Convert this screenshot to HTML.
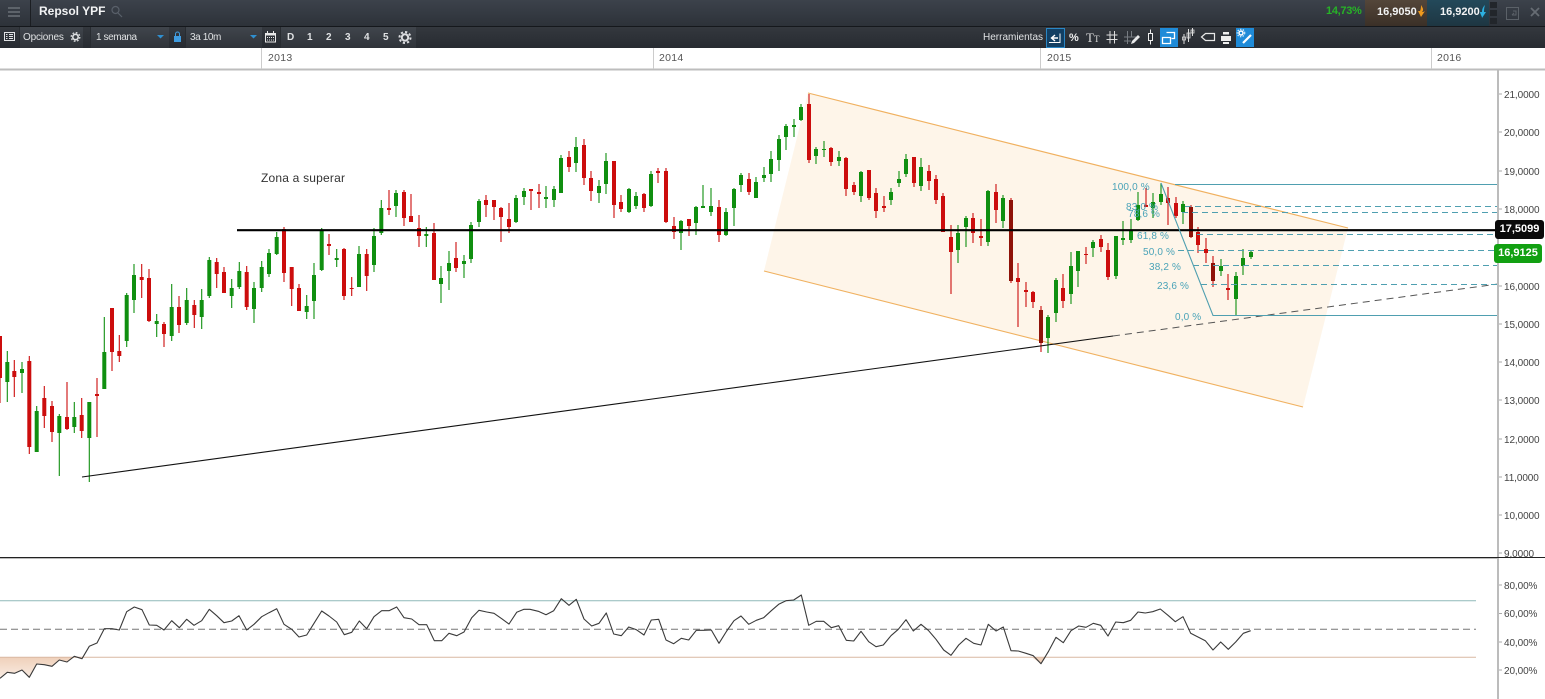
<!DOCTYPE html>
<html lang="es">
<head>
<meta charset="utf-8">
<title>Repsol YPF</title>
<style>
html,body{margin:0;padding:0;background:#fff;width:1545px;height:699px;overflow:hidden;font-family:"Liberation Sans",sans-serif}
#p{position:relative;width:1545px;height:699px;overflow:hidden}
svg{position:absolute;left:0;top:0}
.a{position:absolute;white-space:nowrap}
#t1{left:0;top:0;width:1545px;height:26px;background:linear-gradient(#3c424b,#2d3239);border-bottom:1px solid #15181c}
#t2{left:0;top:27px;width:1545px;height:21px;background:linear-gradient(#34383e,#272b31)}
.tb{top:27px;height:21px;background:linear-gradient(#40454c,#2f3339);border-left:1px solid #282c31}
.w{color:#dfe1e3;font-size:10px;line-height:20px;top:28px}
.y{top:52px;font-size:10.5px;line-height:12px;color:#555;letter-spacing:.3px}
.ax{left:1504px;font-size:10px;line-height:12px;color:#444;letter-spacing:-.1px}
.f{font-size:10px;line-height:12px;color:#4aa3b8;letter-spacing:.15px}
.lab{color:#fff;font-weight:bold;font-size:11px;text-align:center}
</style>
</head>
<body>
<div id="p">
<div class="a" id="t1"></div>
<div class="a" id="t2"></div>
<div class="a" style="left:30px;top:0;width:1px;height:26px;background:#1b1e22"></div>
<div class="a" style="left:39px;top:4px;font-size:12px;line-height:15px;font-weight:bold;color:#f2f3f4">Repsol YPF</div>
<div class="a" style="left:1326px;top:4px;font-size:11px;line-height:15px;color:#27b327;font-weight:bold;letter-spacing:-.3px">14,73%</div>
<div class="a" style="left:1365px;top:0;width:62px;height:26px;background:linear-gradient(#54463a,#3b3027)"></div>
<div class="a" style="left:1427px;top:0;width:62px;height:26px;background:linear-gradient(#23495a,#1e3642)"></div>
<div class="a" style="left:1377px;top:5px;font-size:11px;line-height:15px;font-weight:bold;color:#f2f3f4">16,9050</div>
<div class="a" style="left:1440px;top:5px;font-size:11px;line-height:15px;font-weight:bold;color:#f2f3f4">16,9200</div>

<div class="a tb" style="left:19px;width:63px"></div>
<div class="a tb" style="left:90px;width:78px"></div>
<div class="a tb" style="left:185px;width:76px"></div>
<div class="a tb" style="left:280px;width:135px"></div>
<div class="a w" style="left:23px;letter-spacing:-.2px">Opciones</div>
<div class="a w" style="left:96px;letter-spacing:-.4px">1 semana</div>
<div class="a w" style="left:190px;letter-spacing:-.4px">3a 10m</div>
<div class="a w" style="left:287px;font-weight:bold">D</div>
<div class="a w" style="left:307px;font-weight:bold">1</div>
<div class="a w" style="left:326px;font-weight:bold">2</div>
<div class="a w" style="left:345px;font-weight:bold">3</div>
<div class="a w" style="left:364px;font-weight:bold">4</div>
<div class="a w" style="left:383px;font-weight:bold">5</div>
<div class="a w" style="left:983px">Herramientas</div>

<div class="a" style="left:1046px;top:28px;width:17px;height:18px;background:#123f63;border:1px solid #2a86c4"></div>
<div class="a" style="left:1160px;top:28px;width:18px;height:19px;background:#1f8bd8"></div>
<div class="a" style="left:1236px;top:28px;width:18px;height:19px;background:#1f8bd8"></div>
<div class="a w" style="left:1069px;font-weight:bold;font-size:11px;color:#eee">%</div>
<div class="a" style="left:1086px;top:28px;line-height:20px;color:#ddd;font-family:'Liberation Serif',serif;font-size:13px">T<span style="font-size:9px">T</span></div>

<svg width="1545" height="699" viewBox="0 0 1545 699" fill="none">
<!-- header icons -->
<path d="M8 8h12M8 12h12M8 16h12" stroke="#5d636a" stroke-width="2"/>
<circle cx="115.500" cy="10" r="3.500" stroke="#59606a" stroke-width="1.200"/><path d="M118 13l4 4" stroke="#59606a" stroke-width="1.200"/>
<path d="M1421 5c2 3 3 5 1 7 2 0 3-1 3-1l-4 6-3-6h2c1-2 1-4 1-6z" fill="#ef9a1e"/>
<path d="M1485 5c-1 3-1 5-1 7h2l-4 6c0-2-2-4-2-6h2c0-3 1-5 3-7z" fill="#2cb0e0"/>
<path d="M1490 2h7v6h-7zM1490 10h7v6h-7zM1490 18h7v6h-7z" fill="#22262b"/>
<path d="M1506.500 7.500h12v12h-12z" stroke="#5b6168"/><path d="M1513 11h3v4h-4M1512 15l2-2" stroke="#5b6168"/>
<path d="M1531 8l8 8M1539 8l-8 8" stroke="#666c73" stroke-width="1.800"/>
<!-- toolbar icons -->
<path d="M4.500 32.500h10v8h-10z" stroke="#e2e4e6"/><path d="M6 34.500h1.500M6 36.500h1.500M6 38.500h1.500M9 34.500h4M9 36.500h4M9 38.500h4" stroke="#e2e4e6"/>
<circle cx="75.500" cy="37" r="2.700" stroke="#dfe1e3" stroke-width="1.600"/><circle cx="75.500" cy="37" r="4.300" stroke="#dfe1e3" stroke-width="1.300" stroke-dasharray="1.700 1.700"/>
<path d="M157 35h7l-3.500 3.500z" fill="#2f8fd0"/><path d="M250 35h7l-3.500 3.500z" fill="#2f8fd0"/>
<path d="M174 36h7v6h-7z" fill="#3f9ce0"/><path d="M175.500 36v-2a2 2 0 0 1 4 0v2" stroke="#3f9ce0"/>
<path d="M265.500 33.500h10v8.500h-10z" stroke="#e8e8e8"/><path d="M265 33h11v2.500h-11z" fill="#e8e8e8"/><path d="M267.500 31v3M273.500 31v3" stroke="#e8e8e8"/><path d="M267 37.500h8M267 40h8" stroke="#e8e8e8" stroke-dasharray="1 1"/>
<circle cx="405" cy="37.500" r="3.200" stroke="#dcdde0" stroke-width="2"/><circle cx="405" cy="37.500" r="5.500" stroke="#dcdde0" stroke-width="2" stroke-dasharray="2.200 2.100"/>
<path d="M1049 42.500h11v-9" stroke="#fff"/><path d="M1058 38h-6M1055 35l-3.500 3 3.500 3" stroke="#fff" stroke-width="1.400"/>
<path d="M1106.500 35h11M1106.500 39.500h11M1110 31v12.500M1114.500 31v12.500" stroke="#ddd"/>
<path d="M1124 37h14M1124 41h7M1127.500 31v13M1131.500 31v6" stroke="#777c82"/><path d="M1131 44l1-3 6-6 2 2-6 6z" fill="#e9eaeb"/>
<path d="M1150.500 29.500v15" stroke="#eee"/><path d="M1148.500 33.500h4v7h-4z" stroke="#eee" fill="#2a2e34"/>
<path d="M1162.500 37.500h8v6h-8zM1166.500 32.500h8v6h-3" stroke="#fff" stroke-width="1.300"/>
<path d="M1184 34v10M1188.500 29v13M1192.500 28v8" stroke="#ddd"/><path d="M1182.500 37h3v3h-3zM1187 33h3v5h-3zM1191 30h3v3h-3z" stroke="#ddd" stroke-width=".8"/>
<path d="M1201.500 37l4-3.500h9v7h-9z" stroke="#e8e8e8" stroke-width="1.200"/>
<path d="M1221 36h10v5h-10z" fill="#eee"/><path d="M1223 32h6v2.500h-6zM1223 42h6v2h-6z" fill="#eee"/>
<circle cx="1241" cy="33" r="2" stroke="#fff" stroke-width="1.500"/><circle cx="1241" cy="33" r="3.800" stroke="#fff" stroke-dasharray="1.400 1.400"/><path d="M1243 43l8-8" stroke="#fff" stroke-width="2.200"/>

<!-- time strip -->
<path d="M0 69.500h1545" stroke="#bdbdbd" stroke-width="2"/>
<path d="M261.500 48v21M653.500 48v21M1040.500 48v21M1431.500 48v21" stroke="#ccc"/>

<!-- channel -->
<path d="M808 93L1348 228L1303 407L764 271z" fill="#fef5e9"/>
<path d="M808 93L1348 228M764 271L1303 407" stroke="#f0b160" stroke-width="1.100"/>

<!-- green candles -->
<g stroke="#108f10">
<path stroke-width="1.100" d="M7.300 351V402M22 362V393M36.700 406V452M59.300 414V476M74.300 402V433M89.300 402V482M104.300 317V389M126.700 293V347M134 264V313M156.700 314V337M171.700 284V341M186.700 288V325M201.700 289V329M209.300 257V298M231.700 279V308M239.300 262V289M254 282V323M261.700 261V292M269 249V277M276.700 232V255M306.700 295V319M314 263V319M321.700 228V271M336.700 249V267M359 246V287M374 228V272M381.300 200V235M396 190V217M426.300 227V247M441 266V303M449 251V290M464 255V278M471 222V263M479 199V227M516 195V223M524 188V205M546 186V208M554 186V207M561 155V193M576 137V172M599 180V203M606 153V194M629 188V213M636 192V209M651 171V207M681 220V250M696 206V235M703 185V208M711 188V216M726 208V236M734 188V226M741 173V192M756 177V198M764 167V182M771 151V182M779 135V171M786 124V150M794 119V137M801 104V121M816 147V164M824 141V157M839 151V166M861 171V202M891 188V205M899 171V187M906 154V177M921 158V191M958 225V263M966 216V247M988 190V246M1003 195V228M1048 315V353M1056 278V322M1071 252V304M1078 251V287M1093 240V257M1116 236V279M1123 221V245M1131 219V243M1138 192V221M1153 193V218M1161 183V205M1183 201V224M1221 259V276M1236 272V316M1243 249V275M1251 250V259"/>
<path stroke-width="4" d="M7.300 362V382M22 369V373M36.700 411V452M59.300 416V433M74.300 417V427M89.300 402V438M104.300 352V389M126.700 295V341M134 275V300M156.700 321V324M171.700 307V336M186.700 300V323M201.700 300V317M209.300 260V296M231.700 288V296M239.300 271V287M254 288V309M261.700 267V288M269 253V274M276.700 237V254M306.700 306V312M314 275V301M321.700 230V270M336.700 258V260M359 254V287M374 236V265M381.300 208V233M396 193V206M426.300 234V236M441 278V284M449 263V271M464 261V264M471 225V259M479 201V222M516 198V222M524 191V197M546 197V199M554 189V200M561 158V193M576 147V163M599 186V193M606 161V184M629 189V212M636 196V206M651 174V206M681 221V233M696 207V223M703 206V208M711 206V212M726 212V235M734 189V208M741 175V185M756 182V198M764 175V178M771 159V174M779 139V160M786 126V137M794 125V127M801 107V120M816 149V156M824 149V150M839 157V161M861 172V196M891 192V200M899 179V183M906 159V174M921 167V186M958 233V250M966 218V227M988 191V242M1003 198V221M1048 317V338M1056 280V313M1071 266V294M1078 251V271M1093 242V248M1116 236V276M1123 238V240M1131 230V240M1138 205V220M1153 202V208M1161 194V202M1183 204V212M1221 266V271M1236 276V299M1243 258V266M1251 252V257"/>
</g>
<!-- red candles -->
<g stroke="#cc0d0d">
<path stroke-width="1.100" d="M0 336V403M14.300 360V397M29.300 356V454M44.300 386V428M52 401V442M67 382V430M81.700 398V438M97 378V437M112 308V371M119.300 335V362M141.700 264V298M149 269V322M164 322V347M179 296V333M194.300 300V328M216.700 258V288M224 267V293M246.700 266V310M284 227V282M291.700 267V306M299 284V311M329 234V255M344 248V300M351.700 277V296M366.700 249V291M389 190V215M404 190V226M411 194V222M419 215V247M434 223V280M456 242V272M486 195V217M494 200V220M501 207V242M509 203V233M531 189V210M539 184V208M569 151V172M584 139V185M591 171V201M614 161V218M621 195V212M644 193V212M658 168V183M666 168V223M674 217V239M689 219V236M719 200V242M749 173V195M809 94V163M831 147V166M846 157V196M854 182V195M869 170V200M876 188V218M884 196V212M914 157V187M929 165V190M936 175V204M943 193V232M951 225V294M973 213V243M981 219V246M996 184V223M1011 198V283M1018 263V327M1026 282V307M1033 291V308M1041 306V352M1063 274V308M1086 247V264M1101 235V252M1108 243V280M1146 188V207M1168 187V225M1176 197V218M1191 205V238M1198 227V253M1206 238V263M1213 256V287M1228 274V300"/>
<path stroke-width="4" d="M0 336V378M14.300 371V377M29.300 361V447M44.300 398V416M52 406V432M67 417V429M81.700 415V431M97 394V396M112 308V352M119.300 351V356M141.700 277V280M149 278V321M164 324V334M179 307V325M194.300 305V315M216.700 262V274M224 272V293M246.700 272V307M284 229V273M291.700 267V289M299 288V311M329 244V246M344 249V296M351.700 288V289M366.700 254V276M389 208V210M404 192V218M411 216V222M419 228V236M434 233V280M456 258V268M486 200V205M494 200V207M501 208V217M509 219V227M531 189V191M539 192V194M569 157V167M584 145V178M591 178V191M614 161V205M621 202V209M644 194V208M658 171V173M666 171V222M674 226V232M689 219V226M719 207V235M749 179V192M809 104V160M831 148V162M846 158V189M854 185V192M869 170V198M876 193V211M884 206V208M914 157V183M929 171V181M936 179V200M943 196V232M951 237V252M973 218V233M981 236V238M996 192V210M1018 278V282M1026 290V292M1033 292V302M1063 288V301M1086 254V255M1101 239V247M1108 250V277M1146 205V207M1168 198V203M1176 203V216M1198 232V245M1206 249V253M1228 288V290"/>
<path stroke="#8f1208" stroke-width="4" d="M1011 200V281M1041 310V343M1191 207V237M1213 263V281"/>
</g>

<!-- zone line + trendline -->
<path d="M237 230.200H1498" stroke="#000" stroke-width="2.200"/>
<path d="M82 477L1113 336" stroke="#111" stroke-width="1.100"/>
<path d="M1113 336L1498 284" stroke="#555" stroke-dasharray="7 5"/>

<!-- fibonacci -->
<path d="M1161 183L1213 315.500H1498M1175 184.500H1498" stroke="#4f9fb0" stroke-width="1.100"/>
<path d="M1185 206.500H1498M1182 212.500H1498M1197 234.500H1498M1178 250.500H1498M1193 265.500H1498M1201 284.500H1498" stroke="#4f9fb0" stroke-dasharray="6 4"/>

<!-- price axis -->
<path d="M1498 70V699" stroke="#bcbcbc" stroke-width="2"/>
<path d="M1499 94h3M1499 132h3M1499 171h3M1499 209h3M1499 286h3M1499 324h3M1499 362h3M1499 400h3M1499 439h3M1499 477h3M1499 515h3M1499 553h3M1499 585h3M1499 613.500h3M1499 642h3M1499 670h3" stroke="#aaa"/>

<!-- separator -->
<path d="M0 557.500H1545" stroke="#222" stroke-width="1"/>
<path d="M0 558.500H1498" stroke="#bbb" stroke-width="1"/>

<!-- RSI -->
<defs><linearGradient id="g" x1="0" y1="657" x2="0" y2="682" gradientUnits="userSpaceOnUse"><stop offset="0" stop-color="#efd0ba"/><stop offset="1" stop-color="#fbf1ea"/></linearGradient></defs>
<path d="M0 657.300H75L74.300 656.300L67 662L59.300 660L52 666.300L44.300 664.700L36.700 664L29.300 677.300L22 670L14.700 673.300L7.300 672.300L0 678.300z" fill="url(#g)"/>
<path d="M1032 657.300H1046L1041 663.700z" fill="#efd0ba"/>
<path d="M0 600.700H1476" stroke="#8fb9b9"/>
<path d="M0 657.300H1476" stroke="#d9b8a2"/>
<path d="M0 629.300H1476" stroke="#777" stroke-dasharray="7 4"/>
<polyline stroke="#3a3a3a" stroke-width="1.100" stroke-linejoin="round" points="0,678.300 7.300,672.300 14.700,673.300 22,670 29.300,677.300 36.700,664 44.300,664.700 52,666.300 59.300,660 67,662 74.300,656.300 82,658.700 89.300,646.300 97,643 104.300,628.700 112,628.700 119.300,630 126.700,611.700 134.300,607 142,609.700 149.300,625 156.700,625.300 164,630 171.700,620.700 179.300,627.700 186.700,619.300 194,625.300 201.700,620.700 209.300,609.300 216.700,615.700 224,622.700 231.700,621 239,615.700 246.700,630 254,624.300 261.700,616.700 269,612.700 276.700,608.700 284,624.300 291.700,629.300 299,637 306.700,635 314,623.300 321.700,611 329,616 336.700,622 344.300,634.700 351.700,632.300 359.300,621 366.700,628.700 374,616.700 381.700,610.700 389,610.700 396.700,607 404,617.700 411.700,619 419,624.700 426.700,624.700 434.300,640.700 441.700,640.700 449,633.300 456.700,635.700 464,632 471.700,617.700 479,610.300 486.700,612 494,613.300 501.700,618.700 509,624 516.700,612.300 524,609.300 530,609.300 538.300,611.300 546,614.700 553.700,610.700 561.300,598.700 569,605.300 576.300,599.300 584,619 591.700,626 599,623.300 606.300,613 613.700,634 621.300,635.700 628.700,627 636.300,629.700 644,635 651.300,620 658.700,619.300 666,640 673.700,643.700 681.300,638.300 688.700,640 696.300,630.300 703.700,630.300 711.300,630 719,643.300 726.700,631 734,620.700 741,616 748.700,624.300 756.300,620.300 763.700,617.700 771.300,610.700 778.700,604.300 786,600.700 793.700,600 801.300,595 808.700,625.300 816.300,621.300 823.700,621.300 831.300,627.700 838.700,625.700 846.300,640.300 853.700,641 861,631.300 868.700,641.700 876,646.700 883.300,645 891,635.700 898.300,629.300 906,619.700 913.300,631 921,624.300 928.300,630.300 936,639.300 943.700,650 951,655.300 958.700,645 966,638.300 973.700,643.300 981,645 988.300,624.300 996,631 1003.300,627 1011,650.700 1018.300,651 1026,653.300 1033.300,655.700 1041,663.700 1048.300,651.700 1056,637.300 1063.300,642.700 1071,630.700 1078.700,626 1086,627.300 1093.300,623.300 1100.700,625.300 1108,636 1115.700,622 1123.300,622.700 1130.700,620.300 1138,612 1145.300,613 1152.700,611.700 1160.300,609 1168,615.300 1175.300,621.700 1183,616.700 1190.700,633.300 1198,637 1205.300,640.700 1213,650 1220.700,642 1228.300,649.300 1235.700,642 1243.300,633.300 1250.700,630.700"/>
</svg>

<div class="a y" style="left:268px">2013</div>
<div class="a y" style="left:659px">2014</div>
<div class="a y" style="left:1047px">2015</div>
<div class="a y" style="left:1437px">2016</div>

<div class="a" style="left:261px;top:171px;font-size:12px;line-height:15px;color:#333;letter-spacing:.2px">Zona a superar</div>

<div class="a f" style="left:1112px;top:182px">100,0 %</div>
<div class="a f" style="left:1126px;top:202px">83,0 %</div>
<div class="a f" style="left:1128px;top:209px">78,6 %</div>
<div class="a f" style="left:1137px;top:231px">61,8 %</div>
<div class="a f" style="left:1143px;top:247px">50,0 %</div>
<div class="a f" style="left:1149px;top:262px">38,2 %</div>
<div class="a f" style="left:1157px;top:281px">23,6 %</div>
<div class="a f" style="left:1175px;top:312px">0,0 %</div>

<div class="a ax" style="top:90px">21,0000</div>
<div class="a ax" style="top:128px">20,0000</div>
<div class="a ax" style="top:167px">19,0000</div>
<div class="a ax" style="top:205px">18,0000</div>
<div class="a ax" style="top:282px">16,0000</div>
<div class="a ax" style="top:320px">15,0000</div>
<div class="a ax" style="top:358px">14,0000</div>
<div class="a ax" style="top:396px">13,0000</div>
<div class="a ax" style="top:435px">12,0000</div>
<div class="a ax" style="top:473px">11,0000</div>
<div class="a ax" style="top:511px">10,0000</div>
<div class="a ax" style="top:549px">9,0000</div>
<div class="a ax" style="top:581px">80,00%</div>
<div class="a ax" style="top:609px">60,00%</div>
<div class="a ax" style="top:638px">40,00%</div>
<div class="a ax" style="top:666px">20,00%</div>

<div class="a lab" style="left:1495px;top:220px;width:49px;height:19px;line-height:19px;background:#0a0a0a;border-radius:3px">17,5099</div>
<div class="a lab" style="left:1494px;top:244px;width:48px;height:19px;line-height:19px;background:#12a012;border-radius:3px">16,9125</div>
</div>
</body>
</html>
